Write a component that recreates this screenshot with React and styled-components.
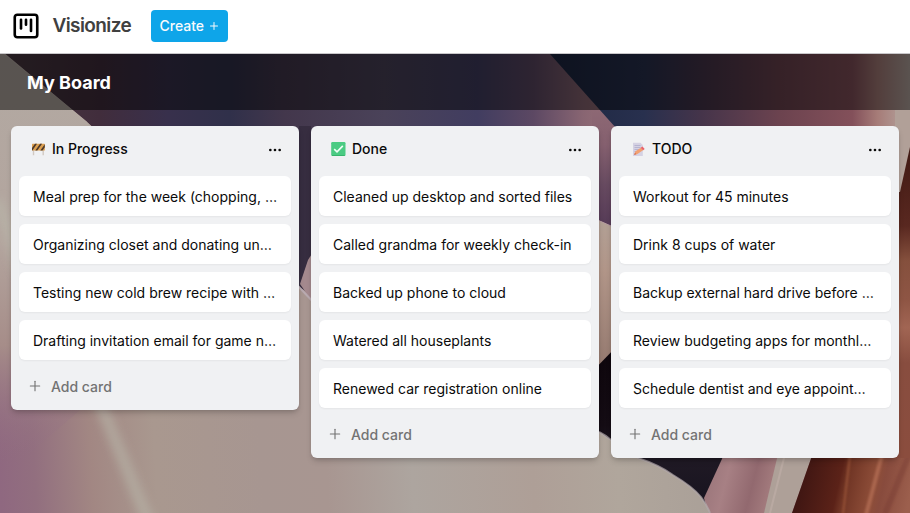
import React from "react";
import styled, { createGlobalStyle } from "styled-components";
import { SquareKanban, Plus, Ellipsis } from "lucide-react";

const GlobalStyle = createGlobalStyle`
  *, *::before, *::after { box-sizing: border-box; }
  body { margin: 0; font-family: Inter, sans-serif; color: #0a0a0a; -webkit-font-smoothing: antialiased; }
`;

const Page = styled.div`
  display: flex;
  flex-direction: column;
  height: 513px;
  overflow: hidden;
`;

const Navbar = styled.header`
  display: flex;
  align-items: center;
  flex: 0 0 54px;
  padding: 0 11px 1px;
  background: #fff;
  border-bottom: 1px solid #c9c7ca;
`;

const Logo = styled.div`
  display: flex;
  align-items: center;
  gap: 11.5px;
  width: 120px;
  margin-right: 20px;

  svg { flex-shrink: 0; }
`;

const Brand = styled.span`
  font-size: 19px;
  line-height: 28px;
  font-weight: 600;
  letter-spacing: -0.6px;
  color: #404040;
`;

const CreateButton = styled.button`
  display: flex;
  align-items: center;
  gap: 4px;
  width: 77px;
  height: 32px;
  padding: 0 8px 0 8.5px;
  border: 0;
  border-radius: 4px;
  background: #0ea5e9;
  color: #f8fafc;
  font: 500 14px/20px Inter, sans-serif;

  svg { flex-shrink: 0; }
`;

const Board = styled.main`
  position: relative;
  isolation: isolate;
  flex: 1;
  min-height: 0;
`;

const Wallpaper = styled.svg`
  position: absolute;
  inset: 0;
  z-index: -1;
  width: 100%;
  height: 100%;
`;

const BoardBar = styled.div`
  display: flex;
  align-items: center;
  height: 56px;
  padding: 2px 27px 0;
  background: rgba(0, 0, 0, 0.5);
`;

const BoardTitle = styled.h1`
  margin: 0;
  color: #fff;
  font-size: 18px;
  line-height: 28px;
  font-weight: 700;
`;

const Lists = styled.div`
  display: grid;
  grid-template-columns: repeat(3, 288px);
  align-items: start;
  gap: 12px;
  padding: 16px 11px;
`;

const List = styled.section`
  padding: 8px;
  border-radius: 6px;
  background: #f0f1f3;
  box-shadow: 0 4px 6px -1px rgba(0, 0, 0, 0.16), 0 2px 4px -2px rgba(0, 0, 0, 0.16);
`;

const ListHeader = styled.header`
  display: flex;
  align-items: center;
  height: 30px;
  padding: 0 8px 0 11px;
`;

const Emoji = styled.span`
  display: flex;
  width: 17px;
  margin-right: 5px;
`;

const ListTitle = styled.h2`
  flex: 1;
  margin: 0;
  font-size: 14px;
  line-height: 20px;
  font-weight: 500;
`;

const MenuIcon = styled(Ellipsis)`
  margin-top: 2px;
`;

const Cards = styled.div`
  display: flex;
  flex-direction: column;
  gap: 8px;
  margin-top: 12px;
`;

const Card = styled.article`
  height: 40px;
  padding: 10px 14px;
  border-radius: 6px;
  overflow: hidden;
  text-overflow: ellipsis;
  white-space: nowrap;
  background: #fff;
  box-shadow: 0 1px 2px rgba(0, 0, 0, 0.05);
  font-size: 14px;
  line-height: 22px;
`;

const AddButton = styled.button`
  display: flex;
  align-items: center;
  gap: 8px;
  width: 100%;
  height: 34px;
  margin-top: 8px;
  padding: 3px 8px 0;
  border: 0;
  background: transparent;
  color: #737373;
  font: 500 14px/20px Inter, sans-serif;

  svg { margin-bottom: 2px; }
`;

const columns = [
  { icon: "barrier", title: "In Progress", cards: ["Meal prep for the week (chopping, marinating)", "Organizing closet and donating unused clothes", "Testing new cold brew recipe with oat milk", "Drafting invitation email for game night"] },
  { icon: "check", title: "Done", cards: ["Cleaned up desktop and sorted files", "Called grandma for weekly check-in", "Backed up phone to cloud", "Watered all houseplants", "Renewed car registration online"] },
  { icon: "memo", title: "TODO", cards: ["Workout for 45 minutes", "Drink 8 cups of water", "Backup external hard drive before update", "Review budgeting apps for monthly savings", "Schedule dentist and eye appointments"] },
];

function ListIcon({ name }) {
  if (name === "check") {
    return (
      <svg width="17" height="16" viewBox="0 0 17 16">
        <rect x="1.2" y="1" width="14.3" height="14" rx="1.3" fill="#4bcb83" />
        <path d="M2 14.5h12.7" stroke="#36b56c" />
        <path d="m4.2 8.2 2.8 2.7 5.8-6" fill="none" stroke="#f1fff7" strokeWidth="1.6" />
      </svg>
    );
  }
  if (name === "barrier") {
    return (
      <svg width="17" height="16" viewBox="0 0 17 16">
        <path d="M3.5 3v11.3m9.7-11.3v11.3" stroke="#d1c9c2" strokeWidth="1.4" />
        <rect x="2" y="2.8" width="12.8" height="6.8" rx="0.5" fill="#dca050" />
        <path d="m2 7 3-4.2h2L2.4 9.6H2zm3.3 2.6 4.8-6.8h2L7.3 9.6zm5 0 4.5-6.4v3.1l-2.3 3.3z" fill="#4b382b" />
      </svg>
    );
  }
  return (
    <svg width="17" height="16" viewBox="0 0 17 16">
      <path d="M3 1.7h7.5l2.3 2.3v11H3z" fill="#d5d2e3" />
      <path d="M4.5 4.5h6m-6 2h6m-6 2h5m-5 2h4" stroke="#aaa7c8" strokeWidth=".7" />
      <path d="m4.2 14 1-3.4 6-4 2.2 2.4-6.4 4.2z" fill="#f2a071" />
      <path d="m10.8 6.8 1.7-1.2 2.2 2.4-1.6 1.2z" fill="#e9626b" />
      <path d="m4.2 14 .7-1.9 1.4 1z" fill="#c95d48" />
    </svg>
  );
}

function Stops({ values }) {
  return values.map(([offset, color]) => <stop key={offset} offset={offset} stopColor={color} />);
}

function Background() {
  return (
    <Wallpaper viewBox="0 54 910 459" preserveAspectRatio="none" aria-hidden="true">
      <defs>
        <linearGradient id="night" x1="0" y1="0" x2="620" y2="0" gradientUnits="userSpaceOnUse">
          <Stops values={[[0, "#4a3a42"], [0.16, "#412d3c"], [0.27, "#38304c"], [0.37, "#30304a"], [0.46, "#43374c"], [0.62, "#4a4259"], [0.77, "#413d60"], [0.86, "#5c4863"], [0.94, "#886572"], [1, "#9a7279"]]} />
        </linearGradient>
        <linearGradient id="blue" x1="550" y1="0" x2="910" y2="0" gradientUnits="userSpaceOnUse">
          <Stops values={[[0, "#1c2640"], [0.26, "#28304e"], [0.42, "#45344a"], [0.64, "#6c434f"], [0.84, "#83505a"], [0.91, "#a67c78"], [1, "#b5a6a0"]]} />
        </linearGradient>
        <linearGradient id="sand" x1="0" y1="490" x2="710" y2="450" gradientUnits="userSpaceOnUse">
          <Stops values={[[0, "#8f6880"], [0.05, "#926f7f"], [0.13, "#a28783"], [0.22, "#a9988f"], [0.37, "#a79691"], [0.46, "#a89691"], [0.58, "#ada59f"], [0.75, "#ae9f97"], [0.87, "#b0a69c"], [1, "#aaa098"]]} />
        </linearGradient>
        <linearGradient id="upper" x1="0" y1="54" x2="0" y2="470" gradientUnits="userSpaceOnUse">
          <stop offset="0" stopColor="#b2a9a2" />
          <stop offset="0.45" stopColor="#b3a59e" />
          <stop offset="0.7" stopColor="#a68d89" />
          <stop offset="1" stopColor="#8f6880" stopOpacity="0" />
        </linearGradient>
        <linearGradient id="mauve" x1="0" y1="110" x2="0" y2="225" gradientUnits="userSpaceOnUse">
          <Stops values={[[0, "#8d6874"], [0.3, "#85606f"], [0.65, "#674a60"], [1, "#563b57"]]} />
        </linearGradient>
        <linearGradient id="fold" x1="0" y1="221" x2="0" y2="365" gradientUnits="userSpaceOnUse">
          <Stops values={[[0, "#b2a095"], [0.35, "#b19588"], [1, "#957a70"]]} />
        </linearGradient>
        <linearGradient id="shade" x1="0" y1="350" x2="0" y2="500" gradientUnits="userSpaceOnUse">
          <Stops values={[[0, "#0e060c"], [0.5, "#140c14"], [0.75, "#1f1924"], [1, "#181420"]]} />
        </linearGradient>
        <linearGradient id="rust" x1="800" y1="470" x2="910" y2="495" gradientUnits="userSpaceOnUse">
          <Stops values={[[0, "#3d1512"], [0.36, "#5b2218"], [0.42, "#6f3424"], [0.56, "#814330"], [0.67, "#8e4e39"], [0.75, "#884b3d"], [1, "#9c5f4d"]]} />
        </linearGradient>
        <linearGradient id="edge" x1="0" y1="140" x2="0" y2="458" gradientUnits="userSpaceOnUse">
          <Stops values={[[0, "#3e1812"], [0.27, "#592820"], [0.38, "#85503d"], [0.5, "#8e5544"], [0.59, "#a16553"], [0.7, "#884d3f"], [1, "#8b4d3e"]]} />
        </linearGradient>
        <linearGradient id="rose" x1="710" y1="470" x2="780" y2="488" gradientUnits="userSpaceOnUse">
          <Stops values={[[0, "#9c777c"], [0.25, "#a78084"], [0.62, "#92696f"], [0.9, "#a47c7e"], [1, "#ad8986"]]} />
        </linearGradient>
        <filter id="soft" x="-50%" y="-20%" width="200%" height="140%"><feGaussianBlur stdDeviation="5" /></filter>
        <filter id="fine" x="-50%" y="-20%" width="200%" height="140%"><feGaussianBlur stdDeviation="1" /></filter>
      </defs>
      <rect y="54" width="910" height="459" fill="url(#night)" />
      <path d="M299 126h12v166h-12z" fill="#302639" opacity=".65" />
      <path d="M592 110h12l12 16v105h-24z" fill="url(#mauve)" />
      <path d="M550 54h360v92H632z" fill="url(#blue)" />
      <path d="M588 216q12 4 30 14v120l-30 30z" fill="url(#fold)" />
      <path d="m588 216 30 13" stroke="#b69ba0" strokeWidth="1" />
      <path d="m588 376 30-31 112 100-19 68H588z" fill="url(#shade)" />
      <path d="m727 448 54 0-17 65h-56l-4-15z" fill="url(#rose)" />
      <path d="M3 52 55 96 87 122 160 190 299 287q18 10 28 32l251 102q14 5 33 19 15 9 27 18 21 7 35 17 20 12 28 22 6 8 9 16H0V52z" fill="url(#sand)" />
      <path d="M0 52h3L87 122 160 190V300L80 410 0 480z" fill="url(#upper)" />
      <path d="M3 53 87 122" stroke="#c6b9b1" strokeWidth="1" opacity=".35" />
      <path d="M-4 200q14 30 23 65 45 77 84 145l47 115" fill="none" stroke="#b9b7aa" strokeWidth="12" opacity=".6" filter="url(#soft)" />
      <path d="m300 284 8-24 14-22v78z" fill="#a4898e" />
      <path d="m298 286 20 21" stroke="#b9aab0" strokeWidth="2" />
      <path d="M311 295v160" stroke="#918b85" strokeWidth="8" opacity=".35" filter="url(#soft)" />
      <path d="M599 432q6 3 12 8 15 9 27 18 21 7 35 17 20 12 28 22 6 8 9 16" fill="none" stroke="#b3a9ad" strokeWidth="2" opacity=".7" />
      <path d="M779 450h35l-22 63h-28z" fill="#aea098" />
      <path d="m786 450-16 63" stroke="#c0afa8" strokeWidth="2" opacity=".65" />
      <path d="m814 450 85-30 11-20v113H792z" fill="url(#rust)" />
      <path d="m850 455-7 59" stroke="#a45c3c" strokeWidth="2" opacity=".7" filter="url(#fine)" />
      <path d="m882 455-16 60" stroke="#bd765b" strokeWidth="4" opacity=".6" filter="url(#fine)" />
      <path d="m909 455-24 59" stroke="#71362d" strokeWidth="6" opacity=".35" filter="url(#fine)" />
      <path d="M897 140h13v318h-13z" fill="url(#edge)" />
      <path d="M895 110h15v37l-10 45h-5z" fill="#b1a098" />
    </Wallpaper>
  );
}

export default function App() {
  return (
    <>
      <GlobalStyle />
      <Page>
        <Navbar>
          <Logo><SquareKanban size={30} color="#000" strokeWidth={2.1} /><Brand>Visionize</Brand></Logo>
          <CreateButton>Create <Plus size={12} strokeWidth={2} /></CreateButton>
        </Navbar>
        <Board>
          <Background />
          <BoardBar><BoardTitle>My Board</BoardTitle></BoardBar>
          <Lists>
            {columns.map((column) => (
              <List key={column.title}>
                <ListHeader><Emoji><ListIcon name={column.icon} /></Emoji><ListTitle>{column.title}</ListTitle><MenuIcon size={16} /></ListHeader>
                <Cards>{column.cards.map((card) => <Card key={card}>{card}</Card>)}</Cards>
                <AddButton><Plus size={16} strokeWidth={1.7} />Add card</AddButton>
              </List>
            ))}
          </Lists>
        </Board>
      </Page>
    </>
  );
}
